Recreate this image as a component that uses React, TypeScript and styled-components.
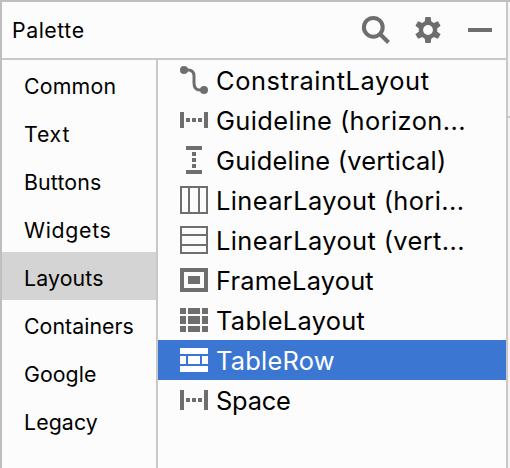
import React from "react";
import styled, { createGlobalStyle, css } from "styled-components";

const GlobalStyle = createGlobalStyle`
  * { box-sizing: border-box; }
  html, body { margin: 0; padding: 0; }
  body { overflow: hidden; background: #fcfcfc; }
`;

const line = "#c8c8c8";
const iconGray = "#6e6e6e";

const Window = styled.div`
  display: grid;
  grid-template-columns: 508px 2px;
  width: 510px;
  height: 468px;
  font-family: Inter, "Liberation Sans", sans-serif;
  color: #000;
  background: #fcfcfc;
  border-top: 2px solid #bebebe;
`;

const Panel = styled.section`
  display: flex;
  flex-direction: column;
  border-left: 2px solid #bebebe;
  border-right: 2px solid ${line};
`;

const Gutter = styled.div`
  display: flex;
  flex-direction: column;
  background: #f4f4f4;
`;

const GutterHead = styled.div`
  height: 116px;
  border-bottom: 2px solid ${line};
`;

const Header = styled.header`
  display: flex;
  align-items: center;
  height: 58px;
  padding: 0 10px;
  border-bottom: 2px solid ${line};
`;

const Label = styled.span<{ $spacing: number }>`
  letter-spacing: ${(p) => p.$spacing}px;
  white-space: nowrap;
`;

const Title = styled.h1`
  flex: 1;
  margin: 0;
  font-size: 21.3px;
  font-weight: 400;
  line-height: 56px;
`;

const Tools = styled.div`
  display: flex;
  gap: 20px;
`;

const ToolIcon = styled.svg`
  display: block;
  width: 32px;
  height: 32px;
  fill: ${iconGray};
`;

const Body = styled.div`
  display: flex;
  flex: 1;
`;

const Categories = styled.nav`
  width: 156px;
  border-right: 2px solid ${line};
`;

const Category = styled.div<{ $active: boolean }>`
  height: 48px;
  padding: 2px 0 0 22px;
  font-size: 21.3px;
  line-height: 48px;
  background: ${(p) => (p.$active ? "#d4d4d4" : "transparent")};
`;

const Items = styled.div`
  flex: 1;
`;

const Item = styled.div<{ $selected: boolean }>`
  display: flex;
  align-items: center;
  height: 40px;
  padding-left: 22px;
  gap: 8px;
  font-size: 25.4px;
  line-height: 42px;
  color: #000;
  fill: ${iconGray};
  ${(p) =>
    p.$selected &&
    css`
      background: #3b76d2;
      color: #fff;
      fill: #fff;
    `}
`;

const ItemIcon = styled.svg`
  display: block;
  width: 28px;
  height: 28px;
  flex: none;
`;

const ItemLabel = styled(Label)`
  padding-top: 1px;
`;

const paths: Record<string, string> = {
  guideH: "M0 6h4v16H0zM24 6h4v16h-4zM6 12h4v4H6zM12 12h4v4h-4zM18 12h4v4h-4z",
  guideV: "M6 0h16v4H6zM6 24h16v4H6zM12 6h4v4h-4zM12 12h4v4h-4zM12 18h4v4h-4z",
  linearH: "M0 0h28v28H0zM2 2v24h6V2zM10 2v24h8V2zM20 2v24h6V2z",
  linearV: "M0 0h28v28H0zM2 2v6h24V2zM2 10v8h24v-8zM2 20v6h24v-6z",
  frame: "M0 2h28v24H0zM4 6v16h20V6zM8 10h12v8H8z",
  table:
    "M0 2h6v6H0zM8 2h12v6H8zM22 2h6v6h-6zM0 10h6v8H0zM8 10h12v8H8zM22 10h6v8h-6zM0 20h6v6H0zM8 20h12v6H8zM22 20h6v6h-6z",
  row: "M0 2h28v6H0zM0 10h6v8H0zM8 10h12v8H8zM22 10h6v8h-6zM0 20h28v6H0z",
  space: "M0 4h4v20H0zM24 4h4v20h-4zM6 12h4v4H6zM12 12h4v4h-4zM18 12h4v4h-4z",
};

function LayoutIcon({ name }: { name: string }) {
  return (
    <ItemIcon viewBox="0 0 28 28">
      {name === "constraint" ? (
        <>
          <circle cx="4" cy="4" r="4" />
          <circle cx="24" cy="24" r="4" />
          <path d="M4 4H8C12 4 14 6 14 10V17C14 22 16 24 20 24H24" fill="none" stroke={iconGray} strokeWidth="3" />
        </>
      ) : (
        <path d={paths[name]} fillRule="evenodd" />
      )}
    </ItemIcon>
  );
}

const categories: [string, number][] = [
  ["Common", 0.2],
  ["Text", 0.8],
  ["Buttons", 0.15],
  ["Widgets", 0.7],
  ["Layouts", 0.15],
  ["Containers", 0.05],
  ["Google", 0.05],
  ["Legacy", 0.1],
];

const items: [string, string, number][] = [
  ["constraint", "ConstraintLayout", 0.58],
  ["guideH", "Guideline (horizon...", 0.42],
  ["guideV", "Guideline (vertical)", 0.2],
  ["linearH", "LinearLayout (hori...", 0.4],
  ["linearV", "LinearLayout (vert...", 0.4],
  ["frame", "FrameLayout", 0.2],
  ["table", "TableLayout", 0.3],
  ["row", "TableRow", 0.25],
  ["space", "Space", -0.2],
];

const teeth = [0, 60, 120, 180, 240, 300];

export default function App() {
  return (
    <>
      <GlobalStyle />
      <Window>
        <Panel>
          <Header>
            <Title>
              <Label $spacing={0.55}>Palette</Label>
            </Title>
            <Tools>
              <ToolIcon viewBox="0 0 32 32">
                <g fill="none" stroke={iconGray} strokeWidth="4">
                  <circle cx="13.3" cy="13.3" r="9.4" />
                  <path d="M19.5 19.5L28.5 28.5" />
                </g>
              </ToolIcon>
              <ToolIcon viewBox="0 0 32 32">
                <circle cx="16" cy="16" r="7.1" fill="none" stroke={iconGray} strokeWidth="4.4" />
                {teeth.map((angle) => (
                  <path key={angle} d="M12.6 9L13.3 3h5.4l.7 6z" transform={`rotate(${angle} 16 16)`} />
                ))}
              </ToolIcon>
              <ToolIcon viewBox="0 0 32 32">
                <path d="M4 14h24v4H4z" />
              </ToolIcon>
            </Tools>
          </Header>
          <Body>
            <Categories>
              {categories.map(([name, spacing]) => (
                <Category key={name} $active={name === "Layouts"}>
                  <Label $spacing={spacing}>{name}</Label>
                </Category>
              ))}
            </Categories>
            <Items>
              {items.map(([icon, name, spacing]) => (
                <Item key={name} $selected={name === "TableRow"}>
                  <LayoutIcon name={icon} />
                  <ItemLabel $spacing={spacing}>{name}</ItemLabel>
                </Item>
              ))}
            </Items>
          </Body>
        </Panel>
        <Gutter>
          <GutterHead />
        </Gutter>
      </Window>
    </>
  );
}
